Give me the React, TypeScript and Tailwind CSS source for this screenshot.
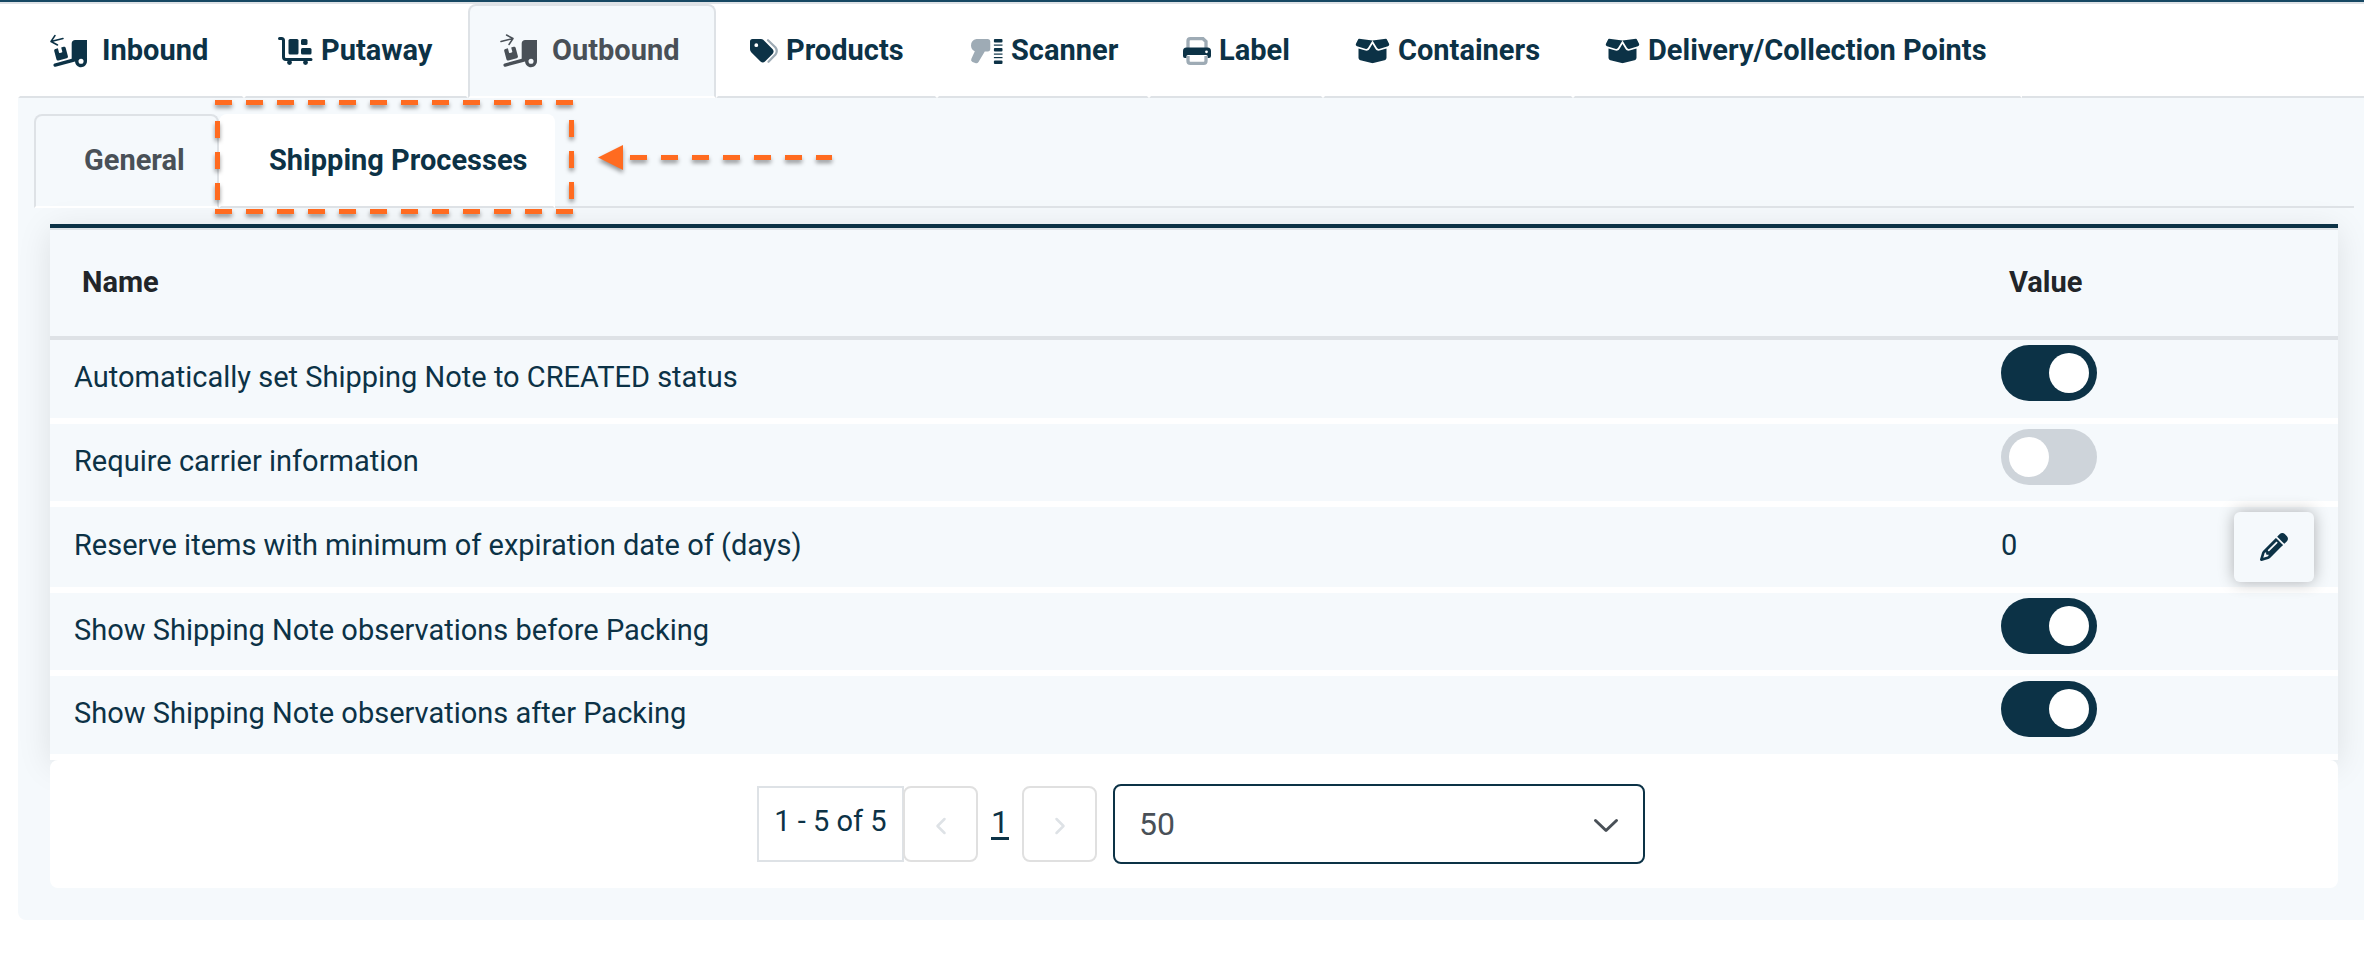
import { useState } from "react";
import { FaBoxOpen, FaPencil } from "react-icons/fa6";

type Setting = {
  id: string;
  name: string;
  value: boolean | number;
};

const initialSettings: Setting[] = [
  { id: "auto-created", name: "Automatically set Shipping Note to CREATED status", value: true },
  { id: "require-carrier", name: "Require carrier information", value: false },
  { id: "expiration-days", name: "Reserve items with minimum of expiration date of (days)", value: 0 },
  { id: "notes-before", name: "Show Shipping Note observations before Packing", value: true },
  { id: "notes-after", name: "Show Shipping Note observations after Packing", value: true },
];

function RampIcon({ direction }: { direction: "in" | "out" }) {
  return (
    <svg viewBox="0 0 38 34" className="h-[34px] w-[38px]" fill="currentColor" aria-hidden="true">
      <g fill="none" stroke="currentColor" strokeWidth="1.5" strokeLinecap="round" strokeLinejoin="round">
        {direction === "in" ? (
          <path d="M13 4.5 1 7.5M5 1.5 1 7.5l6.500 3.500" />
        ) : (
          <path d="M1 7.500 13 4.500M6.500 1l6.500 3.500-4 6" />
        )}
      </g>
      <g transform="translate(3 6) scale(.0531)">
        <path
          fillRule="evenodd"
          d="M640 0V400c0 61.900-50.100 112-112 112c-61 0-110.500-48.700-112-109.300L48.400 502.900c-17.100 4.600-34.600-5.400-39.300-22.500s5.400-34.600 22.500-39.300L352 353.800V64c0-35.300 28.700-64 64-64H640zM576 400a48 48 0 1 0-96 0 48 48 0 1 0 96 0z"
        />
        <path d="M23.100 207.700c-4.600-17.100 5.600-34.600 22.600-39.200l46.400-12.400 20.700 77.300c2.300 8.500 11.100 13.600 19.600 11.300l30.900-8.300c8.500-2.300 13.600-11.100 11.300-19.600l-20.700-77.300 46.400-12.400c17.100-4.600 34.600 5.600 39.200 22.600l41.400 154.500c4.600 17.100-5.600 34.600-22.600 39.200L103.700 384.900c-17.100 4.600-34.600-5.600-39.200-22.600z" />
      </g>
    </svg>
  );
}

function FlatbedIcon() {
  return (
    <svg viewBox="-2 0 37 28" className="h-7 w-[37px]" fill="currentColor" aria-hidden="true">
      <path
        d="M1.500 1.500H3.500Q5.500 1.500 5.500 3.500V20Q5.500 22.500 8 22.500H33"
        fill="none"
        stroke="currentColor"
        strokeWidth="3"
        strokeLinecap="round"
      />
      <rect x="10.500" y="2" width="10" height="15.500" rx="1.500" />
      <rect x="23" y="2" width="6.500" height="6" rx="1.500" />
      <rect x="23" y="11" width="10.500" height="6.500" rx="1.500" />
      <circle cx="11.500" cy="25.500" r="2.400" />
      <circle cx="27.500" cy="25.500" r="2.400" />
    </svg>
  );
}

function TagsIcon() {
  return (
    <svg viewBox="-2 0 30 24" className="h-6 w-[30px]" aria-hidden="true">
      <path
        d="M18 1.200 25.500 8.500Q28 12 25.500 15.500L18.500 22.800"
        fill="none"
        stroke="#9eabb5"
        strokeWidth="2.200"
        strokeLinecap="round"
      />
      <path
        fill="currentColor"
        fillRule="evenodd"
        d="M0 2.500V10.300Q0 12 1.200 13.200L10.500 22.500Q12.800 24.300 15 22.500L22.700 14.800Q24.500 12.600 22.700 10.300L13.500 1.100Q12.400 0 10.800 0H2.500Q0 0 0 2.500ZM6.300 4.300a1.900 1.900 0 1 1 0 3.800 1.900 1.900 0 0 1 0-3.800Z"
      />
    </svg>
  );
}

function ScannerIcon() {
  return (
    <svg viewBox="-2 0 34 25" className="h-[25px] w-[34px]" fill="currentColor" aria-hidden="true">
      <path
        fill="#9eabb5"
        d="M5.500 0H17Q19.300 0 19.300 2.500V9.500Q19.300 12.500 16.800 12.500H13.800L7.500 23Q6.200 25 4.200 24L1.500 23Q-.5 22 .3 20L3.800 12.200Q0 10.500 0 6.500 0 1 5.500 0Z"
      />
      <rect x="22.900" y="0" width="8.600" height="3.500" rx="1" />
      <rect x="22.900" y="5.500" width="8.600" height="1.200" />
      <rect x="22.900" y="9" width="8.600" height="3.500" rx="1" />
      <rect x="22.900" y="14.500" width="8.600" height="1.200" />
      <rect x="22.900" y="18" width="8.600" height="1.200" />
      <rect x="22.900" y="21.500" width="8.600" height="3.500" rx="1" />
    </svg>
  );
}

function PrinterIcon() {
  return (
    <svg viewBox="-2 0 30 28" className="h-7 w-[30px]" aria-hidden="true">
      <path
        d="M5 11V4Q5 1.700 7.300 1.700H20L23 4.500V11M5 19V24Q5 26.300 7.300 26.300H20.700Q23 26.300 23 24V19"
        fill="none"
        stroke="#9eabb5"
        strokeWidth="3.300"
      />
      <path
        fill="currentColor"
        fillRule="evenodd"
        d="M3.500 10.500H24.500Q28 10.500 28 14V19Q28 21 26 21H24.800V19.500Q24.800 18 23 18H5Q3.300 18 3.300 19.500V21H2Q0 21 0 19V14Q0 10.500 3.500 10.500ZM23.500 13.400a1.400 1.400 0 1 0 0 2.800 1.400 1.400 0 0 0 0-2.800Z"
      />
    </svg>
  );
}

const mainTabs = [
  { label: "Inbound", icon: <RampIcon direction="in" />, className: "w-[226px] gap-3.5" },
  { label: "Putaway", icon: <FlatbedIcon />, className: "w-[224px] gap-2" },
  { label: "Outbound", icon: <RampIcon direction="out" />, className: "w-[248px] gap-3.5" },
  { label: "Products", icon: <TagsIcon />, className: "w-[221px] gap-2" },
  { label: "Scanner", icon: <ScannerIcon />, className: "w-[212px] gap-2" },
  { label: "Label", icon: <PrinterIcon />, className: "w-[174px] gap-2" },
  { label: "Containers", icon: <FaBoxOpen className="h-7 w-[35px]" />, className: "w-[250px] gap-2" },
  { label: "Delivery/Collection Points", icon: <FaBoxOpen className="h-7 w-[35px]" />, className: "w-[449px] gap-2" },
];

// dashed frame and arrow that point at the selected sub tab
function Callout() {
  return (
    <svg
      className="pointer-events-none absolute -top-4 left-44 h-32 w-[640px] drop-shadow-[0_3px_2px_rgba(0,0,0,0.4)]"
      viewBox="0 0 640 128"
      aria-hidden="true"
    >
      <g fill="none" stroke="#ff6b20" strokeWidth="5" strokeDasharray="17 14">
        <path d="M5 4.500H364" />
        <path d="M361.500 22V102" />
        <path d="M5 113.500H364" />
        <path d="M7.500 23V102" />
        <path d="M420 59.500H622" />
      </g>
      <path d="M388 59.500 413 47V72Z" fill="#ff6b20" />
    </svg>
  );
}

export default function App() {
  const [mainTab, setMainTab] = useState("Outbound");
  const [settings, setSettings] = useState(initialSettings);
  const [pageSize, setPageSize] = useState("50");

  function toggle(id: string) {
    setSettings((prev) => prev.map((s) => (s.id === id ? { ...s, value: !s.value } : s)));
  }

  return (
    <div className="min-h-screen border-t-2 border-[#164863] bg-white font-['Roboto',sans-serif] text-[29px] text-[#0c3246]">
      {/* MAIN TABS */}
      <nav className="flex border-t-2 border-[#dee2e6] pl-[18px]">
        {mainTabs.map((tab) => (
          <button
            key={tab.label}
            onClick={() => setMainTab(tab.label)}
            className={`flex h-[94px] shrink-0 items-center rounded-t-lg border-2 pl-[30px] font-bold whitespace-nowrap ${tab.className} ${
              mainTab === tab.label
                ? "border-[#dee2e6] border-b-white bg-[#f5f9fc] text-[#495057]"
                : "border-white border-b-[#dee2e6]"
            }`}
          >
            {tab.icon}
            {tab.label}
          </button>
        ))}
        <div className="flex-1 border-b-2 border-[#dee2e6]" />
      </nav>

      {/* CONTENT */}
      <main className="ml-[18px] rounded-bl-lg bg-[#f5f9fc] pt-4 pr-[10px] pb-8 pl-4">
        <nav className="relative flex">
          <button className="h-[94px] w-[185px] shrink-0 rounded-t-lg border-2 border-[#dee2e6] border-b-white pl-12 text-left font-bold text-[#495057]">
            General
          </button>
          <button className="h-[94px] w-[336px] shrink-0 rounded-t-lg border-2 border-white border-b-[#dee2e6] bg-white pl-12 text-left font-bold">
            Shipping Processes
          </button>
          <div className="flex-1 border-b-2 border-[#dee2e6]" />
          <Callout />
        </nav>

        <section className="mx-4 mt-4">
          <div className="border-t-4 border-[#0c3246] shadow-[0_6px_32px_rgba(0,0,0,0.1)]">
            <table className="w-full table-fixed border-separate border-spacing-0 bg-[#f5f9fc] text-left">
              <colgroup>
                <col />
                <col className="w-[233px]" />
                <col className="w-32" />
              </colgroup>
              <thead>
                <tr className="h-[112px] text-[#212529]">
                  <th className="border-t-2 border-b-4 border-[#dee2e6] px-8 font-bold">Name</th>
                  <th className="border-t-2 border-b-4 border-[#dee2e6] px-8 font-bold">Value</th>
                  <th className="border-t-2 border-b-4 border-[#dee2e6]" aria-label="Actions" />
                </tr>
              </thead>
              <tbody>
                {settings.map((s) => (
                  <tr key={s.id} className="h-[83px] first:h-[84px] last:h-[84px]">
                    <td className="border-b-6 border-white px-6 pb-0.5">
                      {typeof s.value === "boolean" ? <label htmlFor={s.id}>{s.name}</label> : s.name}
                    </td>
                    {typeof s.value === "boolean" ? (
                      <td className="border-b-6 border-white px-6 pt-[5px] align-top">
                        <input
                          id={s.id}
                          type="checkbox"
                          checked={s.value}
                          onChange={() => toggle(s.id)}
                          className="block h-14 w-24 appearance-none rounded-full bg-[#ced4da] p-2 before:block before:size-10 before:rounded-full before:bg-white checked:bg-[#0c3246] checked:before:ml-10"
                        />
                      </td>
                    ) : (
                      <td className="border-b-6 border-white px-6 pb-0.5">{s.value}</td>
                    )}
                    <td className="border-b-6 border-white py-[5px] pr-6">
                      {typeof s.value === "number" && (
                        <button
                          aria-label={`Edit ${s.name}`}
                          className="ml-auto flex h-[70px] w-20 items-center justify-center rounded-md bg-[#f5f9fc] shadow-[0_0_16px_rgba(0,0,0,0.3)]"
                        >
                          <FaPencil size={28} />
                        </button>
                      )}
                    </td>
                  </tr>
                ))}
              </tbody>
            </table>
          </div>

          {/* PAGER */}
          <div className="relative flex h-32 items-center justify-center rounded-lg bg-white pl-[14px]">
            <span className="flex h-[76px] w-[147px] items-center justify-center border-2 border-[#dee2e6] pb-1">
              1 - 5 of 5
            </span>
            <button
              aria-label="Previous page"
              disabled
              className="-ml-px flex h-[76px] w-[75px] items-center justify-center rounded-lg border-2 border-[#e0e0e0] pt-1 text-[#dee2e6]"
            >
              <svg viewBox="0 0 12 18" className="h-[18px] w-3" fill="none" stroke="currentColor" strokeWidth="2.500" strokeLinecap="round" strokeLinejoin="round">
                <path d="M9.500 2 2.500 9l7 7" />
              </svg>
            </button>
            <a href="#" className="w-11 pb-1 text-center text-[32px] underline decoration-3 underline-offset-4">
              1
            </a>
            <button
              aria-label="Next page"
              disabled
              className="flex h-[76px] w-[75px] items-center justify-center rounded-lg border-2 border-[#e0e0e0] pt-1 text-[#dee2e6]"
            >
              <svg viewBox="0 0 12 18" className="h-[18px] w-3" fill="none" stroke="currentColor" strokeWidth="2.500" strokeLinecap="round" strokeLinejoin="round">
                <path d="m2.500 2 7 7-7 7" />
              </svg>
            </button>
            <div className="relative ml-4">
              <select
                aria-label="Rows per page"
                value={pageSize}
                onChange={(e) => setPageSize(e.target.value)}
                className="block h-20 w-[532px] appearance-none rounded-lg border-2 border-[#0c3246] bg-white px-6 text-[32px] text-[#495057]"
              >
                <option>10</option>
                <option>25</option>
                <option>50</option>
                <option>100</option>
              </select>
              <svg
                viewBox="0 0 26 16"
                className="pointer-events-none absolute top-[34px] right-[26px] h-4 w-[26px] text-[#495057]"
                fill="none"
                stroke="currentColor"
                strokeWidth="3"
                strokeLinecap="round"
                strokeLinejoin="round"
                aria-hidden="true"
              >
                <path d="M2.500 2.500 13 12.500 23.500 2.500" />
              </svg>
            </div>
          </div>
        </section>
      </main>
    </div>
  );
}
